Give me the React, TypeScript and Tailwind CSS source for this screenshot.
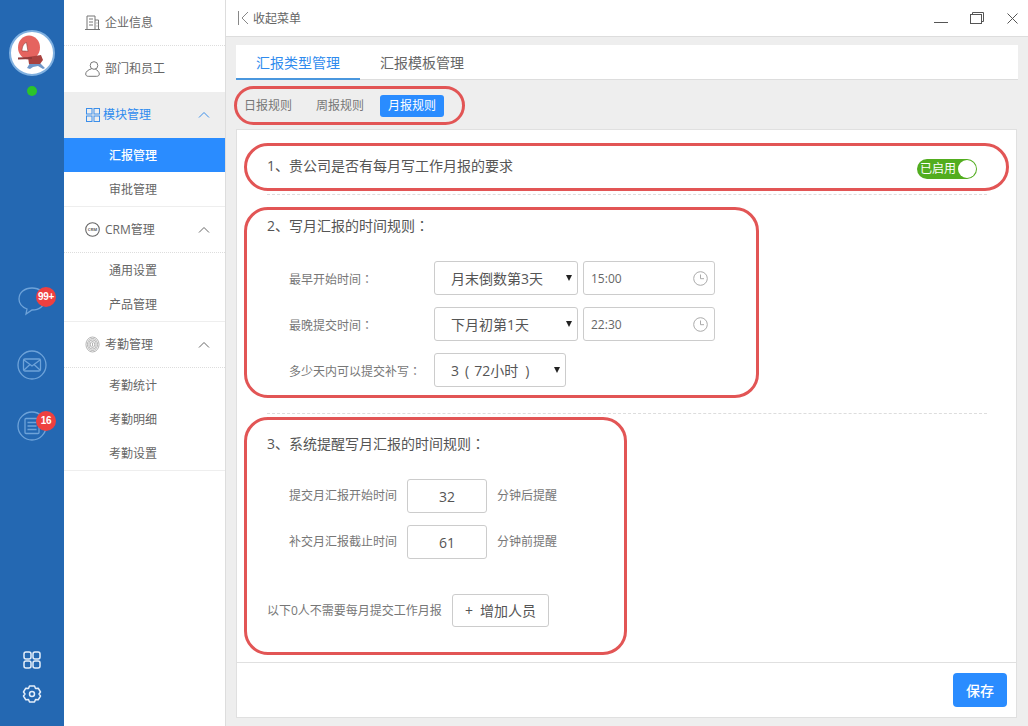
import { ReactNode } from "react";

const FONT = "font-['Open_Sans','Noto_Sans_CJK_SC',sans-serif]";

function Avatar() {
  return (
    <div className="mt-[30px] h-[46px] w-[46px] rounded-full border-[2px] border-[#7fb0e0] bg-white">
      <svg viewBox="0 0 42 42" className="h-full w-full">
        <ellipse cx="18" cy="15.500" rx="11" ry="12" fill="#e5645f" />
        <path d="M15.500 10.500c-2.500.5-4.500 4-4.500 8.500 2.500 0 5 0 6 .5-.5-3-1-6-1.500-9z" fill="#fff" stroke="#8a3a38" strokeWidth="0.600" />
        <path d="M16 36l3-5 5 1 5-1 5 5-2 1-5-3-5 1-3 2z" fill="#6f97c9" />
        <path d="M17 25l13-2 2 5-3 4-11 0z" fill="#a9423f" />
        <path d="M7 25.500l14-.5v2l-14 .5z" fill="#8f3a3a" />
      </svg>
    </div>
  );
}

function ChatIcon() {
  return (
    <svg viewBox="0 0 30 30" className="h-[30px] w-[30px]" fill="none" stroke="#6ea3d9" strokeWidth="1.300">
      <path d="M15 2c7.400 0 13 4.600 13 11s-5.600 11-13 11l-6 4 1-5C5 21 2 17.500 2 13 2 6.600 7.600 2 15 2z" />
    </svg>
  );
}

function MailIcon() {
  return (
    <svg viewBox="0 0 30 30" className="h-[30px] w-[30px]" fill="none" stroke="#6ea3d9" strokeWidth="1.300">
      <circle cx="15" cy="15" r="14" />
      <rect x="6.500" y="9" width="17" height="12" rx="1.500" />
      <path d="M7 10l8 6 8-6M7 20l6-5.500M23 20l-6-5.500" />
    </svg>
  );
}

function ListIcon() {
  return (
    <svg viewBox="0 0 30 30" className="h-[30px] w-[30px]" fill="none" stroke="#6ea3d9" strokeWidth="1.300">
      <circle cx="15" cy="15" r="14" />
      <rect x="8" y="7.500" width="14" height="15" rx="1" />
      <path d="M10.500 11.500h9M10.500 15h9M10.500 18.500h9" />
    </svg>
  );
}

function Badge({ text, top }: { text: string; top: string }) {
  return (
    <span className={`absolute left-[36px] flex h-5 w-5 items-center justify-center rounded-full bg-[#ee4040] font-['Liberation_Sans',sans-serif] text-[10px] font-bold leading-none tracking-[-0.3px] text-white ${top}`}>
      {text}
    </span>
  );
}

function Rail() {
  return (
    <aside className="flex h-full w-16 shrink-0 flex-col items-center bg-[#2468b2]">
      <Avatar />
      <span className="mt-[10px] h-[10px] w-[10px] rounded-full bg-[#2bc42b]" />
      <div className="relative mt-[190px] flex w-16 justify-center">
        <ChatIcon />
        <Badge text="99+" top="top-px" />
      </div>
      <div className="mt-[34px] flex w-16 justify-center">
        <MailIcon />
      </div>
      <div className="relative mt-[31px] flex w-16 justify-center">
        <ListIcon />
        <Badge text="16" top="top-0" />
      </div>
      <svg viewBox="0 0 18 18" className="mt-[210px] h-[18px] w-[18px]" fill="none" stroke="#e4eefa" strokeWidth="1.500">
        <rect x="1" y="1" width="7" height="7" rx="2" />
        <rect x="10" y="1" width="7" height="7" rx="2" />
        <rect x="1" y="10" width="7" height="7" rx="2" />
        <rect x="10" y="10" width="7" height="7" rx="2" />
      </svg>
      <svg viewBox="0 0 20 20" className="mt-[15px] h-5 w-5" fill="none" stroke="#e4eefa" strokeWidth="1.500">
        <path d="M7.500 2h5l1 2.500 2.700-.3L18.500 8 17 10l1.500 2-2.300 3.800-2.700-.3-1 2.500h-5l-1-2.500-2.700.3L1.500 12 3 10 1.500 8l2.300-3.800 2.700.3z" strokeLinejoin="round" />
        <circle cx="10" cy="10" r="2.500" />
      </svg>
    </aside>
  );
}

function Chevron({ color = "#666" }: { color?: string }) {
  return (
    <svg viewBox="0 0 12 7" className="absolute right-[15px] top-1/2 h-[7px] w-3 -translate-y-1/2" fill="none" stroke={color} strokeWidth="1">
      <path d="M1 6l5-5 5 5" />
    </svg>
  );
}

function BuildingIcon() {
  return (
    <svg viewBox="0 0 15 15" className="h-[15px] w-[15px]" fill="none" stroke="#777" strokeWidth="1">
      <path d="M0 14.500h15M2 14.500V1h8v13.500M10 5h3.500v9.500M4 4h4M4 7h4M4 10h4M11.500 8h1M11.500 11h1" />
    </svg>
  );
}

function UserIcon() {
  return (
    <svg viewBox="0 0 15 16" className="h-4 w-[15px]" fill="none" stroke="#777" strokeWidth="1">
      <circle cx="9" cy="4.500" r="3.800" />
      <path d="M6.500 7.800C3 8.800.7 10.800.7 13c0 1.500 1 2.300 2.500 2.300h8.500c1.500 0 2.600-.8 2.600-2.200 0-2-1.800-4-4-4.900" />
    </svg>
  );
}

function GridIcon() {
  return (
    <svg viewBox="0 0 14 14" className="h-[14px] w-[14px]" fill="none" stroke="#3b8eea" strokeWidth="1">
      <rect x="0.500" y="0.500" width="5.500" height="5.500" />
      <rect x="8" y="0.500" width="5.500" height="5.500" />
      <rect x="0.500" y="8" width="5.500" height="5.500" />
      <rect x="8" y="8" width="5.500" height="5.500" />
    </svg>
  );
}

function CrmIcon() {
  return (
    <svg viewBox="0 0 15 15" className="h-[15px] w-[15px]">
      <circle cx="7.500" cy="7.500" r="6.800" fill="none" stroke="#666" strokeWidth="1.100" />
      <text x="7.500" y="9" textAnchor="middle" fontSize="4.200" fontWeight="700" fill="#666">
        CRM
      </text>
    </svg>
  );
}

function FingerIcon() {
  return (
    <svg viewBox="0 0 16 17" className="h-[17px] w-4" fill="none" stroke="#999" strokeWidth="0.800">
      <ellipse cx="8" cy="8.500" rx="7" ry="8" />
      <ellipse cx="8" cy="8.500" rx="5.400" ry="6.400" />
      <ellipse cx="8" cy="8.500" rx="3.800" ry="4.800" />
      <ellipse cx="8" cy="8.500" rx="2.300" ry="3.200" />
      <path d="M8 6.500v4" />
    </svg>
  );
}

function GroupRow({ icon, label, open, active, border }: { icon: ReactNode; label: string; open?: boolean; active?: boolean; border?: boolean }) {
  return (
    <div
      className={
        active
          ? "relative flex h-[46px] items-center gap-[3px] bg-[#eeeeee] pl-[21px] text-[#2f8bee]"
          : border
            ? "relative flex h-[46px] items-center gap-[5px] border-b border-dotted border-[#dddddd] pl-[21px] text-[#666666]"
            : "relative flex h-[46px] items-center gap-[5px] pl-[21px] text-[#666666]"
      }
    >
      <span className="flex w-[15px] justify-center">{icon}</span>
      <span>{label}</span>
      {open && <Chevron color={active ? "#3b8eea" : "#666"} />}
    </div>
  );
}

function SubRow({ label, selected }: { label: string; selected?: boolean }) {
  return (
    <div className={selected ? "flex h-[34px] items-center bg-[#2a8cff] pl-[45px] pt-[2px] font-medium text-white" : "flex h-[34px] items-center pl-[45px] pt-[2px] text-[#666666]"}>
      {label}
    </div>
  );
}

function Menu() {
  return (
    <nav className="flex h-full w-[162px] shrink-0 flex-col border-r border-[#dddddd] bg-white text-[12px] leading-4">
      <GroupRow icon={<BuildingIcon />} label="企业信息" border />
      <GroupRow icon={<UserIcon />} label="部门和员工" />
      <GroupRow icon={<GridIcon />} label="模块管理" open active />
      <SubRow label="汇报管理" selected />
      <SubRow label="审批管理" />
      <div className="border-t border-[#eeeeee]">
        <GroupRow icon={<CrmIcon />} label="CRM管理" open border />
      </div>
      <SubRow label="通用设置" />
      <SubRow label="产品管理" />
      <div className="border-t border-[#eeeeee]">
        <GroupRow icon={<FingerIcon />} label="考勤管理" open border />
      </div>
      <SubRow label="考勤统计" />
      <SubRow label="考勤明细" />
      <SubRow label="考勤设置" />
      <div className="border-t border-[#eeeeee]" />
    </nav>
  );
}

function TopBar() {
  return (
    <header className="flex h-[37px] shrink-0 items-center border-b border-[#dddddd] bg-white pl-3 text-[12px] text-[#666666]">
      <svg viewBox="0 0 11 14" className="mr-[4px] h-[14px] w-[11px]" fill="none" stroke="#888" strokeWidth="1">
        <path d="M0.500 0v14M10 1L4 7l6 6" />
      </svg>
      <span className="pt-[2px]">收起菜单</span>
      <div className="ml-auto flex items-center pr-[10px]">
        <svg viewBox="0 0 14 14" className="h-[14px] w-[14px]" fill="none" stroke="#555" strokeWidth="1">
          <path d="M0 11.500h14" />
        </svg>
        <svg viewBox="0 0 14 12" className="ml-[22px] h-3 w-[14px]" fill="none" stroke="#555" strokeWidth="1">
          <rect x="0.500" y="2.500" width="11" height="9" />
          <path d="M2.500 2.500v-2h11v9h-2" />
        </svg>
        <svg viewBox="0 0 11 11" className="ml-[23px] h-[11px] w-[11px]" fill="none" stroke="#555" strokeWidth="1">
          <path d="M0.500 0.500l10 10M10.500 0.500l-10 10" />
        </svg>
      </div>
    </header>
  );
}

function Tabs() {
  return (
    <div className="mx-[10px] mt-2 flex h-[35px] shrink-0 border-b border-[#dddddd] bg-white text-[14px]">
      <div className="-mb-px flex w-[124px] items-center justify-center border-b-2 border-[#4a97de] pt-[2px] text-[#2f8bee]">汇报类型管理</div>
      <div className="ml-5 flex items-center text-[#666666]">汇报模板管理</div>
    </div>
  );
}

function SubTabs() {
  return (
    <div className="ml-2 mt-[6px] flex h-[39px] w-[231px] shrink-0 items-center rounded-[20px] border-[3px] border-[#e25555] pl-[7px] text-[12px] text-[#777777]">
      <span>日报规则</span>
      <span className="ml-6">周报规则</span>
      <span className="ml-4 flex h-[22px] w-[64px] items-center justify-center rounded-[3px] bg-[#2a8cff] text-white">月报规则</span>
    </div>
  );
}

// full-width colon sits centered in the TC face, like the reference
function Punct({ children }: { children: ReactNode }) {
  return <span className="font-['Noto_Sans_CJK_TC',sans-serif]">{children}</span>;
}

function Select({ label, width }: { label: ReactNode; width: string }) {
  return (
    <div className={`flex h-[34px] items-center justify-between rounded-[3px] border border-[#cccccc] pl-4 pr-[4px] text-[14px] text-[#555555] ${width}`}>
      <span>{label}</span>
      <span className="mr-[1px] h-0 w-0 border-x-[3.500px] border-t-[6px] border-x-transparent border-t-[#222222]" />
    </div>
  );
}

function TimeInput({ value }: { value: string }) {
  return (
    <div className="ml-[5px] flex h-[34px] w-[132px] items-center justify-between rounded-[3px] border border-[#cccccc] pl-[7px] pr-[6px] text-[12px] text-[#666666]">
      <span className="pt-[2px]">{value}</span>
      <svg viewBox="0 0 15 15" className="h-[15px] w-[15px]" fill="none" stroke="#aaa" strokeWidth="1">
        <circle cx="7.500" cy="7.500" r="6.800" />
        <path d="M7.500 3.500v4.200h3.500" />
      </svg>
    </div>
  );
}

function RuleRow({ label, children }: { label: string; children: ReactNode }) {
  return (
    <div className="flex items-center pl-[42px] text-[12px] text-[#777777]">
      <span className="w-[145px] pt-[2px]">
        {label}
        <Punct>：</Punct>
      </span>
      {children}
    </div>
  );
}

function RemindRow({ label, value, suffix }: { label: string; value: string; suffix: string }) {
  return (
    <div className="flex items-center pl-[42px] text-[12px] text-[#777777]">
      <span className="w-[118px]">{label}</span>
      <div className="flex h-[34px] w-[80px] items-center justify-center rounded-[3px] border border-[#cccccc] text-[14px] text-[#555555]">{value}</div>
      <span className="ml-[10px]">{suffix}</span>
    </div>
  );
}

function Dashed({ className }: { className: string }) {
  return <div className={`ml-[23px] w-[720px] border-t border-dashed border-[#dddddd] ${className}`} />;
}

function RulesPanel() {
  return (
    <section className="mx-[10px] mt-[4px] flex h-[589px] w-[781px] shrink-0 flex-col border border-[#e0e0e0] bg-white">
      <div className="flex-1 pl-[7px] pt-[13px]">
        <div className="flex h-[48px] w-[765px] items-center justify-between rounded-[24px] border-[3px] border-[#e25555] pl-5 pr-[29px] text-[14px] text-[#555555]">
          <span className="pb-[3px]">1、贵公司是否有每月写工作月报的要求</span>
          <div className="mt-[3px] flex h-5 w-[60px] items-center justify-between rounded-full bg-[#52ad1f] pl-[3px] pr-[1px] text-[12px] leading-none text-white">
            <span className="pt-px">已启用</span>
            <span className="h-[18px] w-[18px] rounded-full bg-white" />
          </div>
        </div>
        <Dashed className="mt-[3px]" />
        <div className="mt-[12px] h-[191px] w-[515px] rounded-[24px] border-[3px] border-[#e25555]">
          <div className="flex h-8 items-center pb-[2px] pl-5 text-[14px] text-[#555555]">
            <span>
              2、写月汇报的时间规则<Punct>：</Punct>
            </span>
          </div>
          <div className="mt-[19px] flex flex-col gap-3">
            <RuleRow label="最早开始时间">
              <Select label="月末倒数第3天" width="w-[144px]" />
              <TimeInput value="15:00" />
            </RuleRow>
            <RuleRow label="最晚提交时间">
              <Select label="下月初第1天" width="w-[144px]" />
              <TimeInput value="22:30" />
            </RuleRow>
            <RuleRow label="多少天内可以提交补写">
              <Select
                label={
                  <>
                    3<span className="ml-[6px] mr-[5px]">(</span>72小时<span className="ml-[7px]">)</span>
                  </>
                }
                width="w-[132px]"
              />
            </RuleRow>
          </div>
        </div>
        <Dashed className="mt-[15px]" />
        <div className="mt-[3px] h-[238px] w-[383px] rounded-[24px] border-[3px] border-[#e25555]">
          <div className="mt-2 flex h-8 items-center pb-[2px] pl-5 text-[14px] text-[#555555]">
            <span>
              3、系统提醒写月汇报的时间规则<Punct>：</Punct>
            </span>
          </div>
          <div className="mt-[19px] flex flex-col gap-3">
            <RemindRow label="提交月汇报开始时间" value="32" suffix="分钟后提醒" />
            <RemindRow label="补交月汇报截止时间" value="61" suffix="分钟前提醒" />
          </div>
          <div className="mt-[35px] flex items-center pl-5 text-[12px] text-[#777777]">
            <span className="w-[185px]">以下0人不需要每月提交工作月报</span>
            <div className="flex h-[33px] w-[97px] items-center justify-center gap-[7px] rounded-[3px] border border-[#cccccc] text-[14px] text-[#555555]">
              <span>+</span>
              <span>增加人员</span>
            </div>
          </div>
        </div>
      </div>
      <div className="flex h-[55px] shrink-0 items-start justify-end border-t border-[#e0e0e0] pr-[9px] pt-[10px]">
        <button type="button" className="h-[34px] w-[54px] rounded-[4px] bg-[#2a8cff] text-[14px] font-medium text-white">
          保存
        </button>
      </div>
    </section>
  );
}

export default function App() {
  return (
    <div className={`flex h-[726px] w-[1028px] overflow-hidden bg-[#eeeeee] ${FONT}`}>
      <Rail />
      <Menu />
      <main className="flex min-w-0 flex-1 flex-col">
        <TopBar />
        <Tabs />
        <SubTabs />
        <RulesPanel />
      </main>
    </div>
  );
}
